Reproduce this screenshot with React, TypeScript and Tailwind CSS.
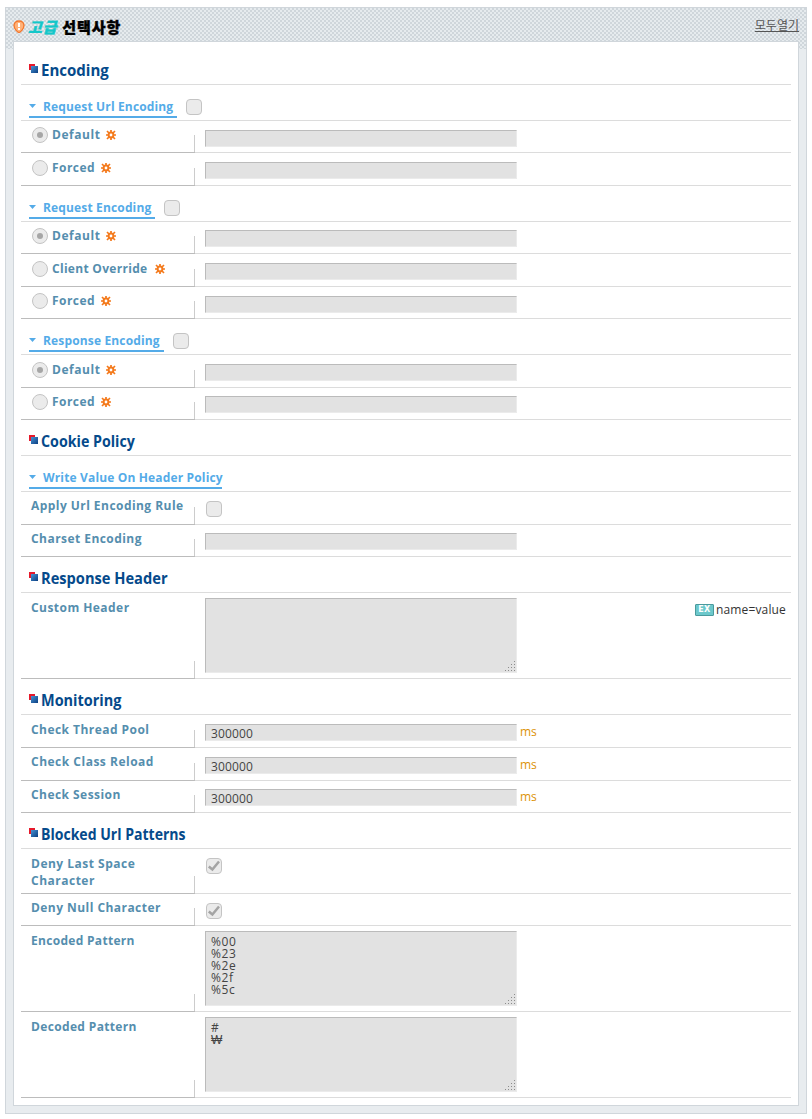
import React from "react";

const F = "font-['Open_Sans','Noto_Sans','Noto_Sans_CJK_KR',sans-serif]";

function Gear({ className = "ml-[6px]" }: { className?: string }) {
  return (
    <svg className={`mt-[4px] shrink-0 ${className}`} width="10" height="10" viewBox="0 0 10 10">
      <path d="M5 0v10M0 5h10M1 1l8 8M9 1L1 9" stroke="#f47a1c" strokeWidth="1.700" />
      <circle cx="5" cy="5" r="2.400" fill="#fff" stroke="#f47a1c" strokeWidth="2" />
    </svg>
  );
}

function Check({ on = false, className = "" }: { on?: boolean; className?: string }) {
  return (
    <span className={`block size-4 shrink-0 rounded-[4px] border border-[#c4c4c4] bg-[#ebebeb] ${className}`}>
      {on && (
        <svg width="14" height="14" viewBox="0 0 14 14">
          <path d="M1.800 7.500l3.600 3L12 2.500" fill="none" stroke="#a4a4a4" strokeWidth="2.500" />
        </svg>
      )}
    </span>
  );
}

function Radio({ on = false }: { on?: boolean }) {
  return (
    <span className="mr-1 mt-px flex size-4 shrink-0 items-center justify-center rounded-full border border-[#c4c4c4] bg-[#ebebeb]">
      {on && <span className="size-[6px] rounded-full bg-[#a6a6a6]" />}
    </span>
  );
}

function Section({ title, h = "h-9", w }: { title: string; h?: string; w: string }) {
  return (
    <div className={`flex items-end border-b border-[#dcdcdc] pl-2 ${h}`}>
      <svg className="mb-[11px] mr-[3px]" width="9" height="9" viewBox="0 0 9 9" shapeRendering="crispEdges">
        <defs>
          <linearGradient id="sq" x1="0" y1="0" x2="1" y2="1">
            <stop offset="0" stopColor="#4a93d3" />
            <stop offset="1" stopColor="#0a3f82" />
          </linearGradient>
        </defs>
        <path d="M0 0h6v2H2v4H0z" fill="#e6192b" />
        <path d="M2 2h7v7H2z" fill="url(#sq)" />
      </svg>
      <h2 className={`mb-[4px] origin-left whitespace-nowrap text-[16px] leading-5 font-bold text-[#054a8b] ${w}`}>{title}</h2>
    </div>
  );
}

function Sub({ title, w, box = true }: { title: string; w: string; box?: boolean }) {
  return (
    <div className="flex h-9 items-end border-b border-[#dcdcdc] pl-2">
      <div className={`mb-[2px] flex h-[20px] items-start border-b-2 border-[#54abe8] ${w}`}>
        <svg className="mt-[6px] mr-[7px] shrink-0" width="7" height="4" viewBox="0 0 7 4">
          <path d="M0 0h7L3.5 4z" fill="#54abe8" />
        </svg>
        <h3 className="whitespace-nowrap text-[12px] leading-[17px] font-bold tracking-[0.15px] text-[#54abe8]">{title}</h3>
      </div>
      {box && <Check className="mb-[5px] ml-[9px]" />}
    </div>
  );
}

type RowProps = {
  label: React.ReactNode;
  h: string;
  pad: string;
  ls?: string;
  radio?: "on" | "off";
  gear?: string;
  children?: React.ReactNode;
  top?: string;
};

function Row({ label, h, pad, ls = "tracking-[0.45px]", radio, gear, children, top = "pt-[9px]" }: RowProps) {
  return (
    <div className={`flex ${h}`}>
      <div className="flex w-[174px] items-end border-b border-[#bcbcbc]">
        <div className={`flex h-full w-[173px] items-start ${radio ? "pl-[11px]" : "pl-[10px]"} ${pad}`}>
          {radio && <Radio on={radio === "on"} />}
          <span className={`whitespace-nowrap text-[12px] leading-[17px] font-bold text-[#558eae] ${ls}`}>{label}</span>
          {radio && <Gear className={gear} />}
        </div>
        <div className="h-[17px] w-px bg-[#ccc]" />
      </div>
      <div className={`flex grow items-start border-b border-[#dcdcdc] pl-[10px] ${top}`}>{children}</div>
    </div>
  );
}

function Field({ value, unit }: { value?: string; unit?: string }) {
  return (
    <>
      <div className="h-[17px] w-[312px] border border-t-[#bbb] border-l-[#bbb] border-r-[#ebebeb] border-b-[#ebebeb] bg-[#e2e2e2] pl-[5px] text-[12px] leading-[18px] tracking-[0.15px] text-[#444]">
        {value}
      </div>
      {unit && <span className="ml-[3px] text-[12px] leading-[16px] text-[#dc9308]">{unit}</span>}
    </>
  );
}

function Area({ children }: { children?: React.ReactNode }) {
  return (
    <div className="relative h-[75px] w-[312px] border border-t-[#bbb] border-l-[#bbb] border-r-[#ebebeb] border-b-[#ebebeb] bg-[#e2e2e2] pl-[5px] pt-[4px] text-[12px] leading-[12px] tracking-[0.6px] whitespace-pre text-[#444]">
      {children}
      <svg className="absolute right-[1px] bottom-[1px]" width="10" height="10" viewBox="0 0 10 10" shapeRendering="crispEdges">
        <path fill="#8c8c8c" d="M9 0h1v1H9zM9 3h1v1H9zM6 3h1v1H6zM9 6h1v1H9zM6 6h1v1H6zM3 6h1v1H3zM9 9h1v1H9zM6 9h1v1H6zM3 9h1v1H3zM0 9h1v1H0z" />
      </svg>
    </div>
  );
}

export default function App() {
  return (
    <div className={`h-[1119px] w-[812px] bg-white pl-[5px] pt-[7px] ${F}`}>
      <div className="flex h-[1107px] w-[802px] flex-col border border-[#d0d6db] [background:conic-gradient(#d0d7dc_25%,#e8ecef_0_50%,#d0d7dc_0_75%,#e8ecef_0)_0_0/4px_41px_repeat-x,#e8ecef]">
        <div className="-mb-[8px] h-[41px] shrink-0 bg-[#d0d7dc] [background:conic-gradient(#cfd6db_25%,#e6ebee_0_50%,#cfd6db_0_75%,#e6ebee_0)_0_0/4px_4px]">
          <div className="flex items-start justify-between px-[7px]">
            <div className="flex items-center pt-[9px]">
              <svg width="12" height="14" viewBox="0 0 12 14">
                <path d="M6 1C3 1 1 3 1 5.500 1 9 5 12.500 6 12.500s5-3.500 5-7C11 3 9 1 6 1z" fill="#ffb27a" stroke="#f4762a" strokeWidth="1.300" />
                <path d="M5 3h2v4H5zM5 8h2v2H5z" fill="#fff" />
              </svg>
              <h1 className="ml-[3px] text-[15px] leading-5 font-black tracking-[0.95px] text-black [-webkit-text-stroke:0.4px]">
                <em className="text-[#14c7c9]">고급</em> 선택사항
              </h1>
            </div>
            <a className="mt-[9px] text-[12px] leading-[18px] text-[#555] underline">모두열기</a>
          </div>
        </div>
        <div className="z-10 mx-[7px] h-[1065px] border border-[#d0d6db] bg-white px-[7px]">
          <Section title="Encoding" h="h-[43px]" w="scale-x-[0.94]" />
          <Sub title="Request Url Encoding" w="w-[148px]" />
          <Row label="Default" radio="on" h="h-8" pad="pt-[5px]" ls="tracking-[0.55px]"><Field /></Row>
          <Row label="Forced" radio="off" h="h-[33px]" pad="pt-[6px]"><Field /></Row>
          <Sub title="Request Encoding" w="w-[126px]" />
          <Row label="Default" radio="on" h="h-8" pad="pt-[5px]" ls="tracking-[0.55px]" top="pt-[8px]"><Field /></Row>
          <Row label="Client Override" radio="off" h="h-[33px]" pad="pt-[6px]" ls="tracking-[0.3px]" gear="ml-[8px]"><Field /></Row>
          <Row label="Forced" radio="off" h="h-8" pad="pt-[5px]"><Field /></Row>
          <Sub title="Response Encoding" w="w-[135px]" />
          <Row label="Default" radio="on" h="h-[33px]" pad="pt-[6px]" ls="tracking-[0.55px]"><Field /></Row>
          <Row label="Forced" radio="off" h="h-8" pad="pt-[5px]" top="pt-[8px]"><Field /></Row>
          <Section title="Cookie Policy" w="scale-x-[0.89]" />
          <Sub title="Write Value On Header Policy" w="w-[193px]" box={false} />
          <Row label="Apply Url Encoding Rule" h="h-[33px]" pad="pt-[5px]"><Check className="ml-px" /></Row>
          <Row label="Charset Encoding" h="h-8" pad="pt-[5px]" top="pt-[8px]"><Field /></Row>
          <Section title="Response Header" w="scale-x-[0.915]" />
          <Row label="Custom Header" h="h-[86px]" pad="pt-[6px]" top="pt-[5px]">
            <Area />
            <div className="mr-[5px] ml-auto mt-[3px] flex items-center gap-[2px]">
              <span className="-mt-px flex h-[12px] w-[19px] items-center justify-center rounded-[1px] border border-[#4a9a9d] bg-[#6cc8cb] font-['DejaVu_Sans'] text-[8px] leading-none font-bold tracking-[0.5px] text-white">EX</span>
              <span className="text-[12px] leading-[18px] tracking-[0.15px] text-[#333]">name=value</span>
            </div>
          </Row>
          <Section title="Monitoring" w="scale-x-[0.904]" />
          <Row label="Check Thread Pool" h="h-[33px]" pad="pt-[6px]"><Field value="300000" unit="ms" /></Row>
          <Row label="Check Class Reload" h="h-[33px]" pad="pt-[5px]" ls="tracking-[0.5px]"><Field value="300000" unit="ms" /></Row>
          <Row label="Check Session" h="h-8" pad="pt-[5px]" top="pt-[8px]"><Field value="300000" unit="ms" /></Row>
          <Section title="Blocked Url Patterns" w="scale-x-[0.878]" />
          <Row label={<>Deny Last Space<br />Character</>} h="h-[45px]" pad="pt-[6px]" ls="tracking-[0.5px]"><Check on className="ml-px" /></Row>
          <Row label="Deny Null Character" h="h-8" pad="pt-[5px]"><Check on className="ml-px" /></Row>
          <Row label="Encoded Pattern" h="h-[86px]" pad="pt-[6px]" top="pt-[5px]" ls="tracking-[0.3px]"><Area>{"%00\n%23\n%2e\n%2f\n%5c"}</Area></Row>
          <Row label="Decoded Pattern" h="h-[86px]" pad="pt-[6px]" top="pt-[5px]" ls="tracking-[0.35px]">
            <Area>{"#\n"}<span className="font-['Liberation_Sans',sans-serif]">₩</span></Area>
          </Row>
        </div>
      </div>
    </div>
  );
}
